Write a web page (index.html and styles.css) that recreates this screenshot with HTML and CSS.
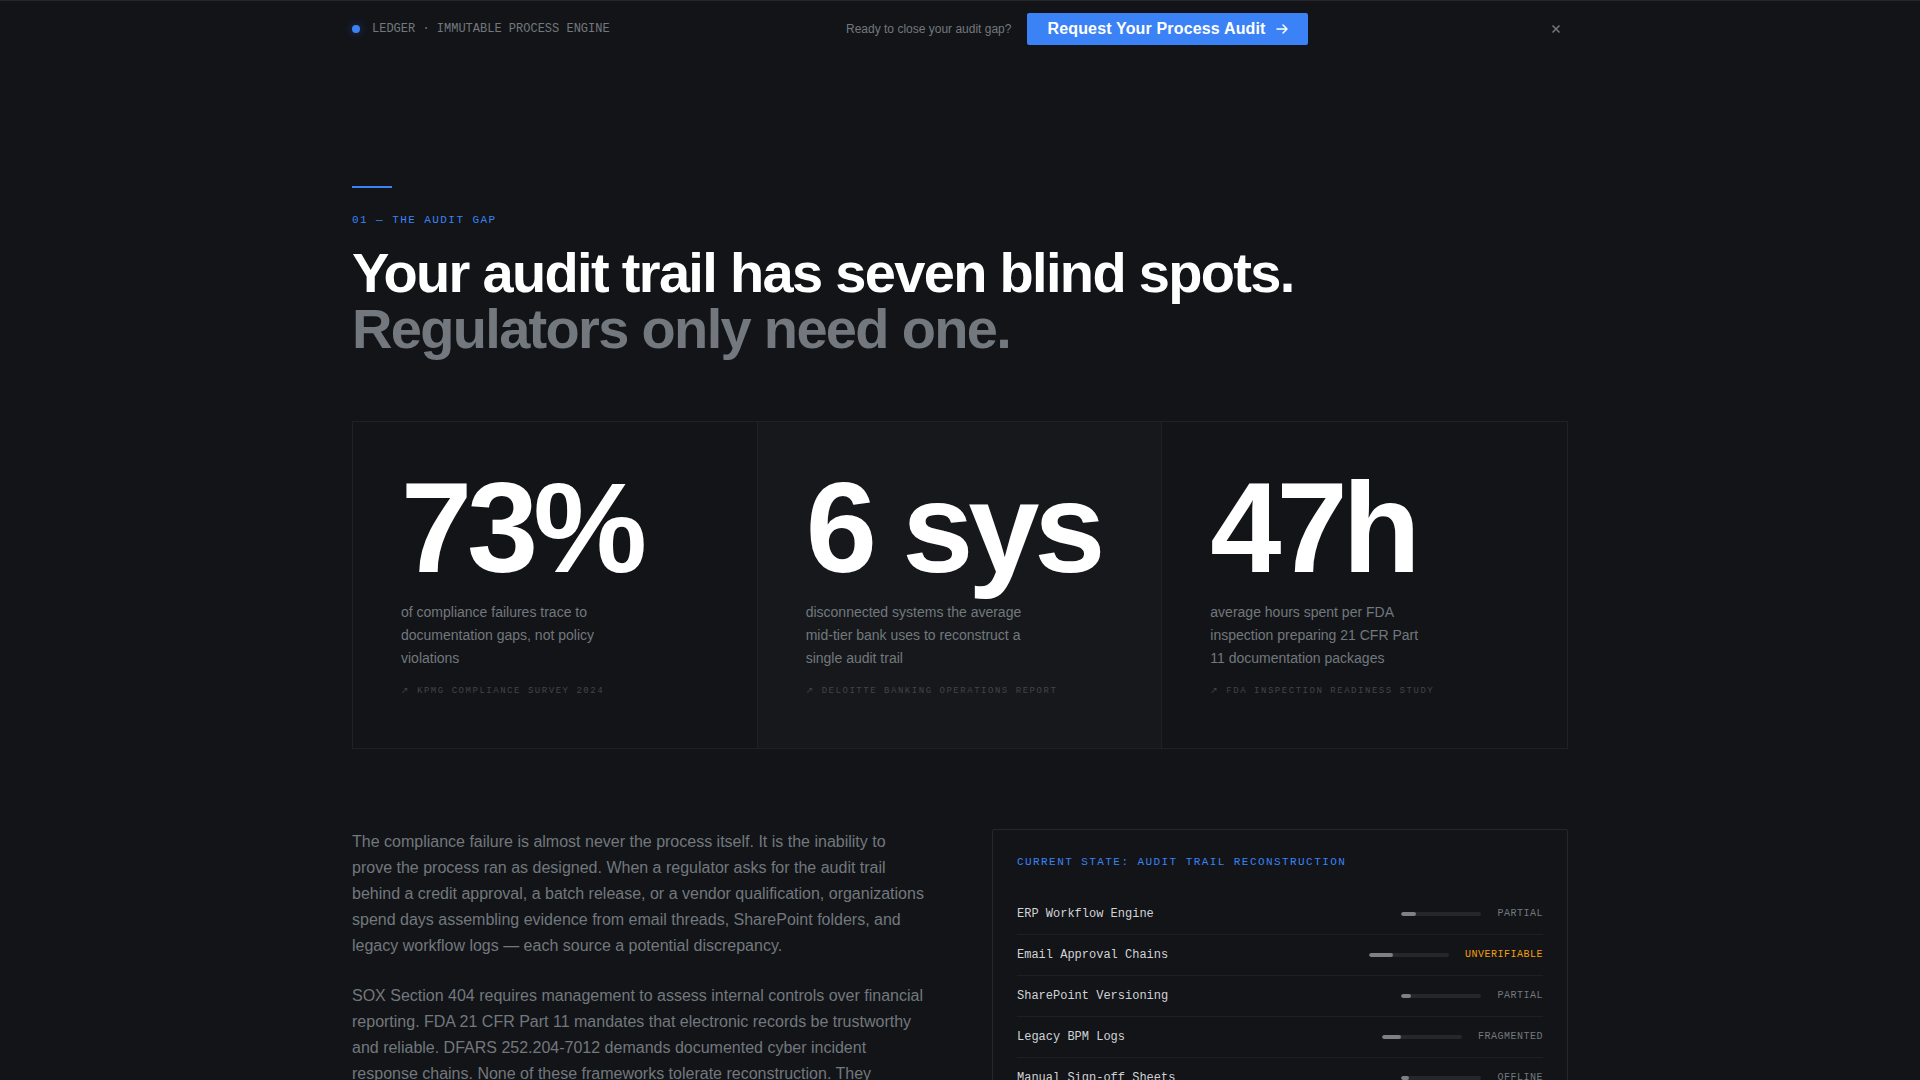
FILE: index.html
```html
<!DOCTYPE html>
<html lang="en">
<head>
    <meta charset="UTF-8">
    <meta name="viewport" content="width=device-width, initial-scale=1.0">
    <title>Ledger</title>
    <link rel="stylesheet" href="styles.css">
</head>
<body>
    <header class="topbar">
        <div class="container topbar-inner">
            <div class="brand">
                <span class="brand-dot"></span>
                <span>LEDGER · IMMUTABLE PROCESS ENGINE</span>
            </div>
            <div class="topbar-cta">
                <span class="topbar-note">Ready to close your audit gap?</span>
                <a class="btn" href="#audit">
                    Request Your Process Audit
                    <svg width="12" height="12" viewBox="0 0 12 12" fill="none" aria-hidden="true">
                        <path d="M1 6h10M7 2l4 4-4 4" stroke="currentColor" stroke-width="1.5" stroke-linecap="round" stroke-linejoin="round"/>
                    </svg>
                </a>
            </div>
            <button class="close" type="button" aria-label="Dismiss">
                <svg width="12" height="12" viewBox="0 0 12 12" fill="none" aria-hidden="true">
                    <path d="M2.5 2.5l7 7M9.5 2.5l-7 7" stroke="currentColor" stroke-width="1.5"/>
                </svg>
            </button>
        </div>
    </header>

    <main class="container section">
        <div class="rule"></div>
        <p class="eyebrow">01 — THE AUDIT GAP</p>
        <h1>Your audit trail has seven blind spots.<br><span class="muted">Regulators only need one.</span></h1>

        <div class="stats">
            <div class="stat">
                <div class="stat-number">73%</div>
                <p class="stat-label">of compliance failures trace to documentation gaps, not policy violations</p>
                <p class="stat-source"><span class="arrow">↗</span> KPMG COMPLIANCE SURVEY 2024</p>
            </div>
            <div class="stat stat-raised">
                <div class="stat-number">6 sys</div>
                <p class="stat-label">disconnected systems the average mid-tier bank uses to reconstruct a single audit trail</p>
                <p class="stat-source"><span class="arrow">↗</span> DELOITTE BANKING OPERATIONS REPORT</p>
            </div>
            <div class="stat">
                <div class="stat-number">47h</div>
                <p class="stat-label">average hours spent per FDA inspection preparing 21 CFR Part 11 documentation packages</p>
                <p class="stat-source"><span class="arrow">↗</span> FDA INSPECTION READINESS STUDY</p>
            </div>
        </div>

        <div class="columns">
            <div class="copy">
                <p>The compliance failure is almost never the process itself. It is the inability to prove the process ran as designed. When a regulator asks for the audit trail behind a credit approval, a batch release, or a vendor qualification, organizations spend days assembling evidence from email threads, SharePoint folders, and legacy workflow logs — each source a potential discrepancy.</p>
                <p>SOX Section 404 requires management to assess internal controls over financial reporting. FDA 21 CFR Part 11 mandates that electronic records be trustworthy and reliable. DFARS 252.204-7012 demands documented cyber incident response chains. None of these frameworks tolerate reconstruction. They</p>
            </div>

            <div class="panel">
                <h2 class="panel-title">CURRENT STATE: AUDIT TRAIL RECONSTRUCTION</h2>
                <ul class="systems">
                    <li>
                        <span class="system-name">ERP Workflow Engine</span>
                        <span class="bar"><span class="bar-fill" style="width: 18%"></span></span>
                        <span class="status">PARTIAL</span>
                    </li>
                    <li>
                        <span class="system-name">Email Approval Chains</span>
                        <span class="bar"><span class="bar-fill" style="width: 30%"></span></span>
                        <span class="status status-warn">UNVERIFIABLE</span>
                    </li>
                    <li>
                        <span class="system-name">SharePoint Versioning</span>
                        <span class="bar"><span class="bar-fill" style="width: 12%"></span></span>
                        <span class="status">PARTIAL</span>
                    </li>
                    <li>
                        <span class="system-name">Legacy BPM Logs</span>
                        <span class="bar"><span class="bar-fill" style="width: 24%"></span></span>
                        <span class="status">FRAGMENTED</span>
                    </li>
                    <li>
                        <span class="system-name">Manual Sign-off Sheets</span>
                        <span class="bar"><span class="bar-fill" style="width: 10%"></span></span>
                        <span class="status">OFFLINE</span>
                    </li>
                </ul>
            </div>
        </div>
    </main>
</body>
</html>
```

FILE: styles.css
```css
* {
    box-sizing: border-box;
    margin: 0;
    padding: 0;
}
body {
    background-color: #121418;
    color: #72787d;
    font-family: "Liberation Sans", Arial, sans-serif;
    font-size: 16px;
    line-height: 26px;
}
.container {
    max-width: 1280px;
    margin: 0 auto;
    padding: 0 32px;
}

/* Top bar */
.topbar {
    border-top: 1px solid #25272b;
    padding: 12px 0;
}
.topbar-inner {
    display: flex;
    align-items: center;
    justify-content: space-between;
}
.brand {
    display: flex;
    align-items: center;
    gap: 12px;
    font-family: "Liberation Mono", "Courier New", monospace;
    font-size: 12px;
    line-height: 16px;
}
.brand-dot {
    width: 8px;
    height: 8px;
    border-radius: 50%;
    background-color: #3b82f6;
    box-shadow: 0 0 8px rgba(59, 130, 246, 0.4);
}
.topbar-cta {
    display: flex;
    align-items: center;
    gap: 16px;
}
.topbar-note {
    font-size: 12px;
}
.btn {
    display: flex;
    align-items: center;
    gap: 10px;
    height: 32px;
    padding: 0 20px;
    border-radius: 2px;
    background-color: #3b82f6;
    color: #fff;
    font-weight: bold;
    letter-spacing: 0.01em;
    text-decoration: none;
}
.btn:hover {
    background-color: #2563eb;
}
.close {
    display: flex;
    align-items: center;
    justify-content: center;
    width: 24px;
    height: 24px;
    border: none;
    background: none;
    color: #72787d;
    cursor: pointer;
}

/* Intro */
.section {
    padding-top: 129px;
}
.rule {
    width: 40px;
    height: 2px;
    background-color: #3b82f6;
}
.eyebrow, .panel-title {
    color: #3b82f6;
    font-family: "Liberation Mono", "Courier New", monospace;
    font-size: 11px;
    font-weight: normal;
    letter-spacing: 0.13em;
    line-height: 16px;
}
.eyebrow {
    margin: 24px 0 17px;
}
h1 {
    color: #fff;
    font-size: 56px;
    line-height: 56px;
    letter-spacing: -0.03em;
}
.muted {
    color: #72787d;
}

/* Stats */
.stats {
    display: grid;
    grid-template-columns: repeat(3, 1fr);
    margin-top: 64px;
    border: 1px solid #1f2125;
}
.stat {
    padding: 48px;
    border-right: 1px solid #1f2125;
}
.stat:last-child {
    border-right: none;
}
.stat-raised {
    background-color: #16181c;
}
.stat-number {
    color: #fff;
    font-size: 128px;
    font-weight: bold;
    line-height: 115px;
    letter-spacing: -0.04em;
    white-space: nowrap;
}
.stat-label {
    max-width: 220px;
    margin-top: 16px;
    font-size: 14px;
    line-height: 23px;
}
.stat-source {
    margin-top: 12px;
    color: #424448;
    font-family: "Liberation Mono", "Courier New", monospace;
    font-size: 9px;
    line-height: 18px;
    letter-spacing: 0.17em;
}
.arrow {
    font-family: "DejaVu Sans", sans-serif;
    line-height: 1;
}

/* Copy and panel */
.columns {
    display: grid;
    grid-template-columns: 1fr 1fr;
    gap: 64px;
    margin-top: 80px;
}
.copy p {
    margin-bottom: 24px;
}
.panel {
    padding: 24px;
    border: 1px solid #25272b;
    border-radius: 2px;
}
.panel-title {
    margin-bottom: 24px;
}
.systems {
    list-style-type: none;
}
.systems li {
    display: flex;
    align-items: center;
    gap: 16px;
    padding: 12px 0;
    border-bottom: 1px solid #1d1f23;
    font-family: "Liberation Mono", "Courier New", monospace;
    font-size: 12px;
    line-height: 16px;
}
.system-name {
    flex: 1;
    color: #d1d3d6;
}
.bar {
    width: 80px;
    height: 4px;
    border-radius: 2px;
    background-color: #25272a;
    overflow: hidden;
}
.bar-fill {
    display: block;
    height: 100%;
    border-radius: 2px;
    background-color: #7d8084;
}
.status {
    font-size: 10px;
    letter-spacing: 0.05em;
}
.status-warn {
    color: #f59e0b;
}
```
